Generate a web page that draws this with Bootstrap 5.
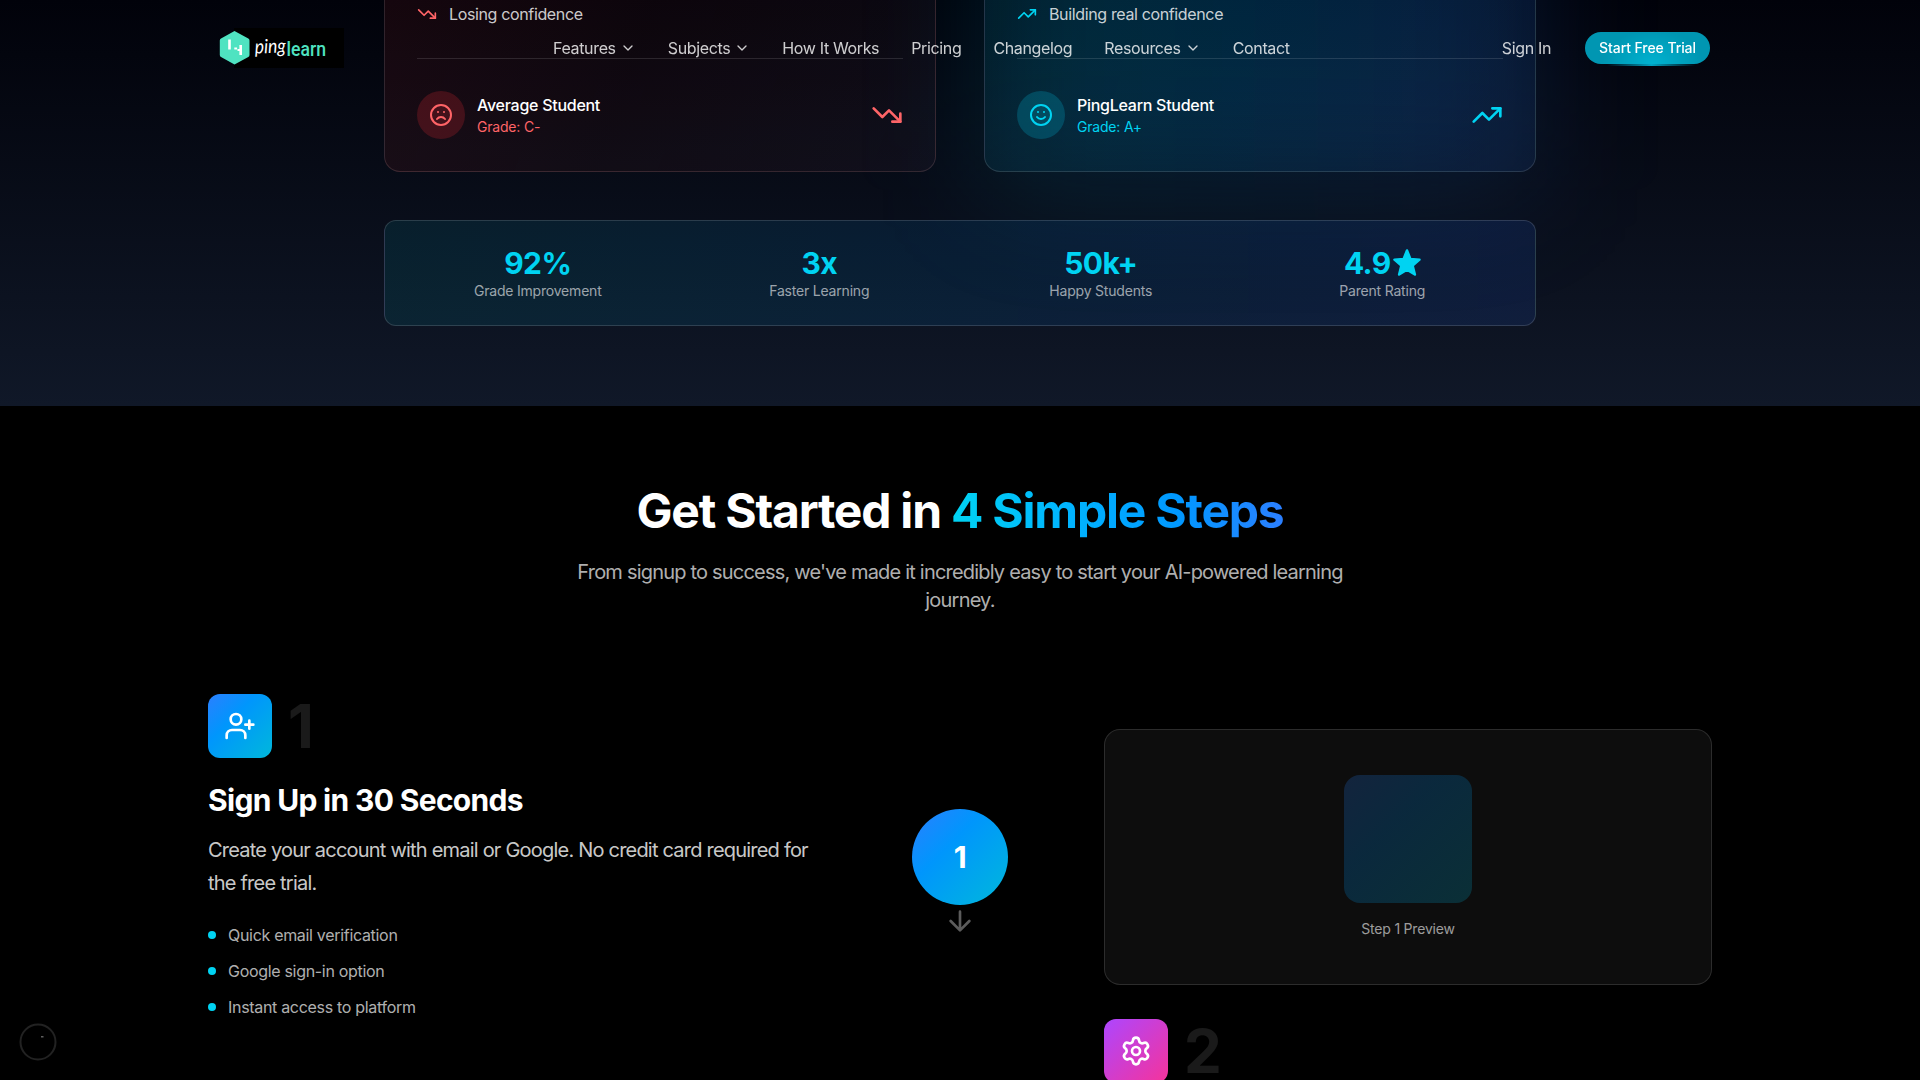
<!DOCTYPE html>
<html lang="en">
<head>
<meta charset="utf-8">
<meta name="viewport" content="width=device-width, initial-scale=1">
<title>PingLearn</title>
<link href="https://cdn.jsdelivr.net/npm/bootstrap@5.3.0/dist/css/bootstrap.min.css" rel="stylesheet">
<style>
  body { font-family: Inter, "Liberation Sans", sans-serif; background: #000; color: #fff; height: 1080px; overflow: hidden; line-height: 24px; letter-spacing: -.36px; -webkit-font-smoothing: antialiased; }
  svg { display: block; flex: none; }
  .stroke-icon { fill: none; stroke: currentColor; stroke-width: 2; stroke-linecap: round; stroke-linejoin: round; }
  .page-wrap { width: 1504px; margin: 0 auto; }
  .t14 { font-size: 14px; line-height: 20px; letter-spacing: -.2px; }
  .person { font-weight: 500; letter-spacing: -.27px; }
  .c-red { color: #ff6467; }
  .c-cyan { color: #00d3f2; }
  .w80 { color: rgba(255,255,255,.8); }
  .w70 { color: rgba(255,255,255,.7); }
  .w60 { color: rgba(255,255,255,.6); }

  .site-nav { height: 96px; padding: 0 2px 0 11px; }
  .nav-links { gap: 32px; }
  .nav-links a, .sign-in { color: rgba(255,255,255,.8); text-decoration: none; display: flex; align-items: center; gap: 4px; }
  .site-nav .nav-links { margin-left: 209px; letter-spacing: -.35px; }
  .sign-in { margin-left: auto; margin-right: 34px; }
  .cta { width: 125px; height: 32px; border-radius: 16px; font-weight: 500; letter-spacing: -.08px; position: relative; color: #fff; background: radial-gradient(ellipse 50px 34px at 54% 100%, #00b2d0, #0096b2); }
  .cta::after { content: ""; position: absolute; left: 22px; right: 14px; top: 32px; height: 2px; background: linear-gradient(90deg, transparent, #00a5c4 50%, transparent); }

  .hero { height: 406px; background: linear-gradient(#01020a, #101828); padding-bottom: 80px; overflow: hidden; }
  .hero-inner { width: 1152px; }
  .compare { gap: 48px; margin-bottom: 48px; }
  .cmp-wrap { position: relative; width: 552px; }
  .cmp-card { height: 580px; padding: 32px; border: 1px solid rgba(255,255,255,.13); border-radius: 16px; position: relative; }
  .cmp-bad { background: linear-gradient(110deg, rgba(120,20,26,.2), rgba(60,10,10,.17) 55%, rgba(45,28,44,.2)), rgba(255,255,255,.01); border-color: rgba(255,190,190,.15); }
  .cmp-good { background: linear-gradient(105deg, rgba(20,160,180,.11), rgba(0,150,220,.1) 50%, rgba(43,115,235,.1)); }
  .glow { position: absolute; inset: 0 0 -18px; border-radius: 24px; filter: blur(60px); background: linear-gradient(90deg, rgba(0,165,200,.16), rgba(0,140,215,.17) 50%, rgba(43,115,225,.16)); }
  .divider-top { border-top: 1px solid rgba(255,255,255,.12); padding-top: 32px; margin-top: 32px; }
  .face { width: 48px; height: 48px; }
  .face-bad { background: rgba(251,44,54,.2); }
  .face-good { background: rgba(0,184,219,.24); }
  .stats { position: relative; border: 1px solid rgba(255,255,255,.14); border-radius: 12px; padding: 24px; gap: 24px; background: linear-gradient(90deg, rgba(0,184,200,.1), rgba(0,150,255,.1) 50%, rgba(43,110,255,.12)); }
  .stats > div { flex: 1; }
  .stat-num { font-size: 30px; line-height: 36px; font-weight: 700; letter-spacing: -.6px; }
  .star { margin-left: 2px; }

  .steps-head { padding-top: 79px; margin-bottom: 80px; }
  .steps-head h2 { font-size: 48px; line-height: 52px; font-weight: 700; margin: 0 0 21px; letter-spacing: -1.22px; }
  .grad-text { background: linear-gradient(90deg, #00d3f2, #00b4ff 35%, #0098ff 68%, #2b7fff); -webkit-background-clip: text; background-clip: text; color: transparent; }
  .sub { font-size: 20px; line-height: 28px; width: 768px; margin: 0 auto; letter-spacing: -.8px; }
  .step-row { display: grid; grid-template-columns: 608px 1fr 608px; align-items: center; }
  .tile { width: 64px; height: 64px; border-radius: 12px; }
  .blue-grad { background: linear-gradient(135deg, #2b7fff, #0096fc 38%, #00b8db); }
  .pink-grad { background: linear-gradient(135deg, #ad46ff, #f6339a); }
  .ghost { font-size: 60px; line-height: 60px; font-weight: 700; color: rgba(255,255,255,.1); }
  .step-title { font-size: 30px; line-height: 36px; font-weight: 700; margin: 24px 0 16px; letter-spacing: -.67px; }
  .step-copy { font-size: 20px; line-height: 32.5px; margin-bottom: 24px; letter-spacing: -.79px; }
  .checks { row-gap: 12px; letter-spacing: -.31px; }
  .dot { width: 8px; height: 8px; background: #00d3f2; }
  .bubble { width: 96px; height: 96px; font-size: 30px; font-weight: 700; position: relative; }
  .bubble svg { position: absolute; top: 96px; left: 32px; color: #fff; opacity: .36; }
  .preview { height: 256px; border: 1px solid rgba(255,255,255,.13); border-radius: 16px; background: #0d0d0d; }
  .preview-box { width: 128px; height: 128px; border-radius: 16px; opacity: .2; margin-bottom: 16px; }
  .corner { position: fixed; left: 19px; top: 1023px; }
</style>
</head>
<body>
<nav class="fixed-top">
  <div class="page-wrap site-nav d-flex align-items-center">
    <svg width="125" height="40" viewBox="0 0 125 40" aria-label="pinglearn">
      <rect x="15" y="0" width="110" height="40" fill="#000"/>
      <path d="M15.500 3 29.300 10.500q1.200.6 1.200 2V27q0 1.300-1.200 2L15.500 36.500 2 29q-1.200-.7-1.200-2V12.500q0-1.300 1.200-2Z" fill="#4fe3c1"/>
      <path d="M10.500 11.500v10M21.700 17v10" stroke="#fff" stroke-width="2.600"/>
      <path d="M15.300 20.500h2.800M18.500 22h3" stroke="#fff" stroke-width="2.200"/>
      <text transform="rotate(-2 36 25)" x="36" y="25.500" font-family="Lato, sans-serif" font-size="19.500" font-style="italic" letter-spacing="0" fill="#fff" textLength="31" lengthAdjust="spacingAndGlyphs">ping</text>
      <text x="67.500" y="27.500" font-family="Roboto, sans-serif" font-size="20" font-weight="500" letter-spacing="0" fill="#4fe3c1" textLength="39.500" lengthAdjust="spacingAndGlyphs">learn</text>
    </svg>
    <div class="nav-links d-flex">
      <a href="#">Features <svg class="stroke-icon" width="16" height="16" viewBox="0 0 24 24"><path d="m6 9 6 6 6-6"/></svg></a>
      <a href="#">Subjects <svg class="stroke-icon" width="16" height="16" viewBox="0 0 24 24"><path d="m6 9 6 6 6-6"/></svg></a>
      <a href="#">How It Works</a>
      <a href="#">Pricing</a>
      <a href="#">Changelog</a>
      <a href="#">Resources <svg class="stroke-icon" width="16" height="16" viewBox="0 0 24 24"><path d="m6 9 6 6 6-6"/></svg></a>
      <a href="#">Contact</a>
    </div>
    <a class="sign-in" href="#">Sign In</a>
    <a class="cta t14 text-decoration-none d-flex align-items-center justify-content-center" href="#">Start Free Trial</a>
  </div>
</nav>

<section class="hero d-flex flex-column justify-content-end align-items-center">
  <div class="hero-inner">
    <div class="compare d-flex">
      <div class="cmp-wrap">
        <div class="cmp-card cmp-bad d-flex flex-column justify-content-end">
          <div class="d-flex align-items-center w80">
            <svg class="stroke-icon c-red me-2" width="20" height="20" viewBox="0 0 24 24"><path d="M16 17h6v-6"/><path d="m22 17-8.500-8.500-5 5L2 7"/></svg>
            <span class="ms-1">Losing confidence</span>
          </div>
          <div class="divider-top d-flex align-items-center">
            <div class="face face-bad rounded-circle c-red d-flex align-items-center justify-content-center me-2">
              <svg class="stroke-icon" width="24" height="24" viewBox="0 0 24 24"><circle cx="12" cy="12" r="10"/><path d="M16 16s-1.500-2-4-2-4 2-4 2M9 9h.01M15 9h.01"/></svg>
            </div>
            <div class="ms-1 me-auto"><div class="person">Average Student</div><div class="t14 c-red">Grade: C-</div></div>
            <svg class="stroke-icon c-red" width="32" height="32" viewBox="0 0 24 24"><path d="M16 17h6v-6"/><path d="m22 17-8.500-8.500-5 5L2 7"/></svg>
          </div>
        </div>
      </div>
      <div class="cmp-wrap">
        <div class="glow"></div>
        <div class="cmp-card cmp-good d-flex flex-column justify-content-end">
          <div class="d-flex align-items-center w80">
            <svg class="stroke-icon c-cyan me-2" width="20" height="20" viewBox="0 0 24 24"><path d="M16 7h6v6"/><path d="m22 7-8.500 8.500-5-5L2 17"/></svg>
            <span class="ms-1">Building real confidence</span>
          </div>
          <div class="divider-top d-flex align-items-center">
            <div class="face face-good rounded-circle c-cyan d-flex align-items-center justify-content-center me-2">
              <svg class="stroke-icon" width="24" height="24" viewBox="0 0 24 24"><circle cx="12" cy="12" r="10"/><path d="M8 14s1.500 2 4 2 4-2 4-2M9 9h.01M15 9h.01"/></svg>
            </div>
            <div class="ms-1 me-auto"><div class="person">PingLearn Student</div><div class="t14 c-cyan">Grade: A+</div></div>
            <svg class="stroke-icon c-cyan" width="32" height="32" viewBox="0 0 24 24"><path d="M16 7h6v6"/><path d="m22 7-8.500 8.500-5-5L2 17"/></svg>
          </div>
        </div>
      </div>
    </div>
    <div class="stats d-flex text-center">
      <div><div class="stat-num c-cyan">92%</div><div class="t14 w60">Grade Improvement</div></div>
      <div><div class="stat-num c-cyan">3x</div><div class="t14 w60">Faster Learning</div></div>
      <div><div class="stat-num c-cyan">50k+</div><div class="t14 w60">Happy Students</div></div>
      <div>
        <div class="stat-num c-cyan d-flex justify-content-center align-items-center">4.9<svg class="star" width="28" height="30" viewBox="1 0 22 24" fill="currentColor" stroke="currentColor" stroke-width="2" stroke-linejoin="round"><path d="m12 2 2.700 6.700 7.300.6-5.500 4.800 1.800 7.100L12 17.400l-6.300 3.800 1.800-7.100L2 9.300l7.300-.6z"/></svg></div>
        <div class="t14 w60">Parent Rating</div>
      </div>
    </div>
  </div>
</section>

<section class="page-wrap">
  <div class="steps-head text-center">
    <h2>Get Started in <span class="grad-text">4 Simple Steps</span></h2>
    <p class="sub w70">From signup to success, we've made it incredibly easy to start your AI-powered learning journey.</p>
  </div>
  <div class="step-row">
    <div>
      <div class="d-flex align-items-center gap-3">
        <div class="tile blue-grad d-flex align-items-center justify-content-center">
          <svg class="stroke-icon" width="32" height="32" viewBox="0 0 24 24"><path d="M16 21v-2a4 4 0 0 0-4-4H6a4 4 0 0 0-4 4v2"/><circle cx="9" cy="7" r="4"/><path d="M19 8v6M22 11h-6"/></svg>
        </div>
        <div class="ghost">1</div>
      </div>
      <h3 class="step-title">Sign Up in 30 Seconds</h3>
      <p class="step-copy w80">Create your account with email or Google. No credit card required for the free trial.</p>
      <ul class="checks list-unstyled d-flex flex-column mb-0 w70">
        <li class="d-flex align-items-center"><span class="dot rounded-circle me-2"></span><span class="ms-1">Quick email verification</span></li>
        <li class="d-flex align-items-center"><span class="dot rounded-circle me-2"></span><span class="ms-1">Google sign-in option</span></li>
        <li class="d-flex align-items-center"><span class="dot rounded-circle me-2"></span><span class="ms-1">Instant access to platform</span></li>
      </ul>
    </div>
    <div class="d-flex justify-content-center">
      <div class="bubble blue-grad rounded-circle d-flex align-items-center justify-content-center">1
        <svg class="stroke-icon" width="32" height="32" viewBox="0 0 24 24"><path d="M12 5v14M19 12l-7 7-7-7"/></svg>
      </div>
    </div>
    <div class="preview d-flex flex-column align-items-center justify-content-center">
      <div class="preview-box blue-grad"></div>
      <div class="t14 w60">Step 1 Preview</div>
    </div>
  </div>
  <div class="step-row">
    <div></div><div></div>
    <div class="d-flex align-items-center gap-3">
      <div class="tile pink-grad d-flex align-items-center justify-content-center">
        <svg class="stroke-icon" width="32" height="32" viewBox="0 0 24 24"><path d="M9.671 4.136a2.340 2.340 0 0 1 4.659 0 2.340 2.340 0 0 0 3.319 1.915 2.340 2.340 0 0 1 2.330 4.033 2.340 2.340 0 0 0 0 3.831 2.340 2.340 0 0 1-2.330 4.033 2.340 2.340 0 0 0-3.319 1.915 2.340 2.340 0 0 1-4.659 0 2.340 2.340 0 0 0-3.320-1.915 2.340 2.340 0 0 1-2.330-4.033 2.340 2.340 0 0 0 0-3.831A2.340 2.340 0 0 1 6.350 6.051a2.340 2.340 0 0 0 3.319-1.915"/><circle cx="12" cy="12" r="3"/></svg>
      </div>
      <div class="ghost">2</div>
    </div>
  </div>
</section>

<svg class="corner" width="38" height="38" viewBox="0 0 38 38"><circle cx="19" cy="19" r="17.500" fill="none" stroke="#222" stroke-width="2"/><path d="M22 13.800h2.500" stroke="#777" stroke-width="1.200"/></svg>
<script src="https://cdn.jsdelivr.net/npm/bootstrap@5.3.0/dist/js/bootstrap.bundle.min.js"></script>
</body>
</html>
